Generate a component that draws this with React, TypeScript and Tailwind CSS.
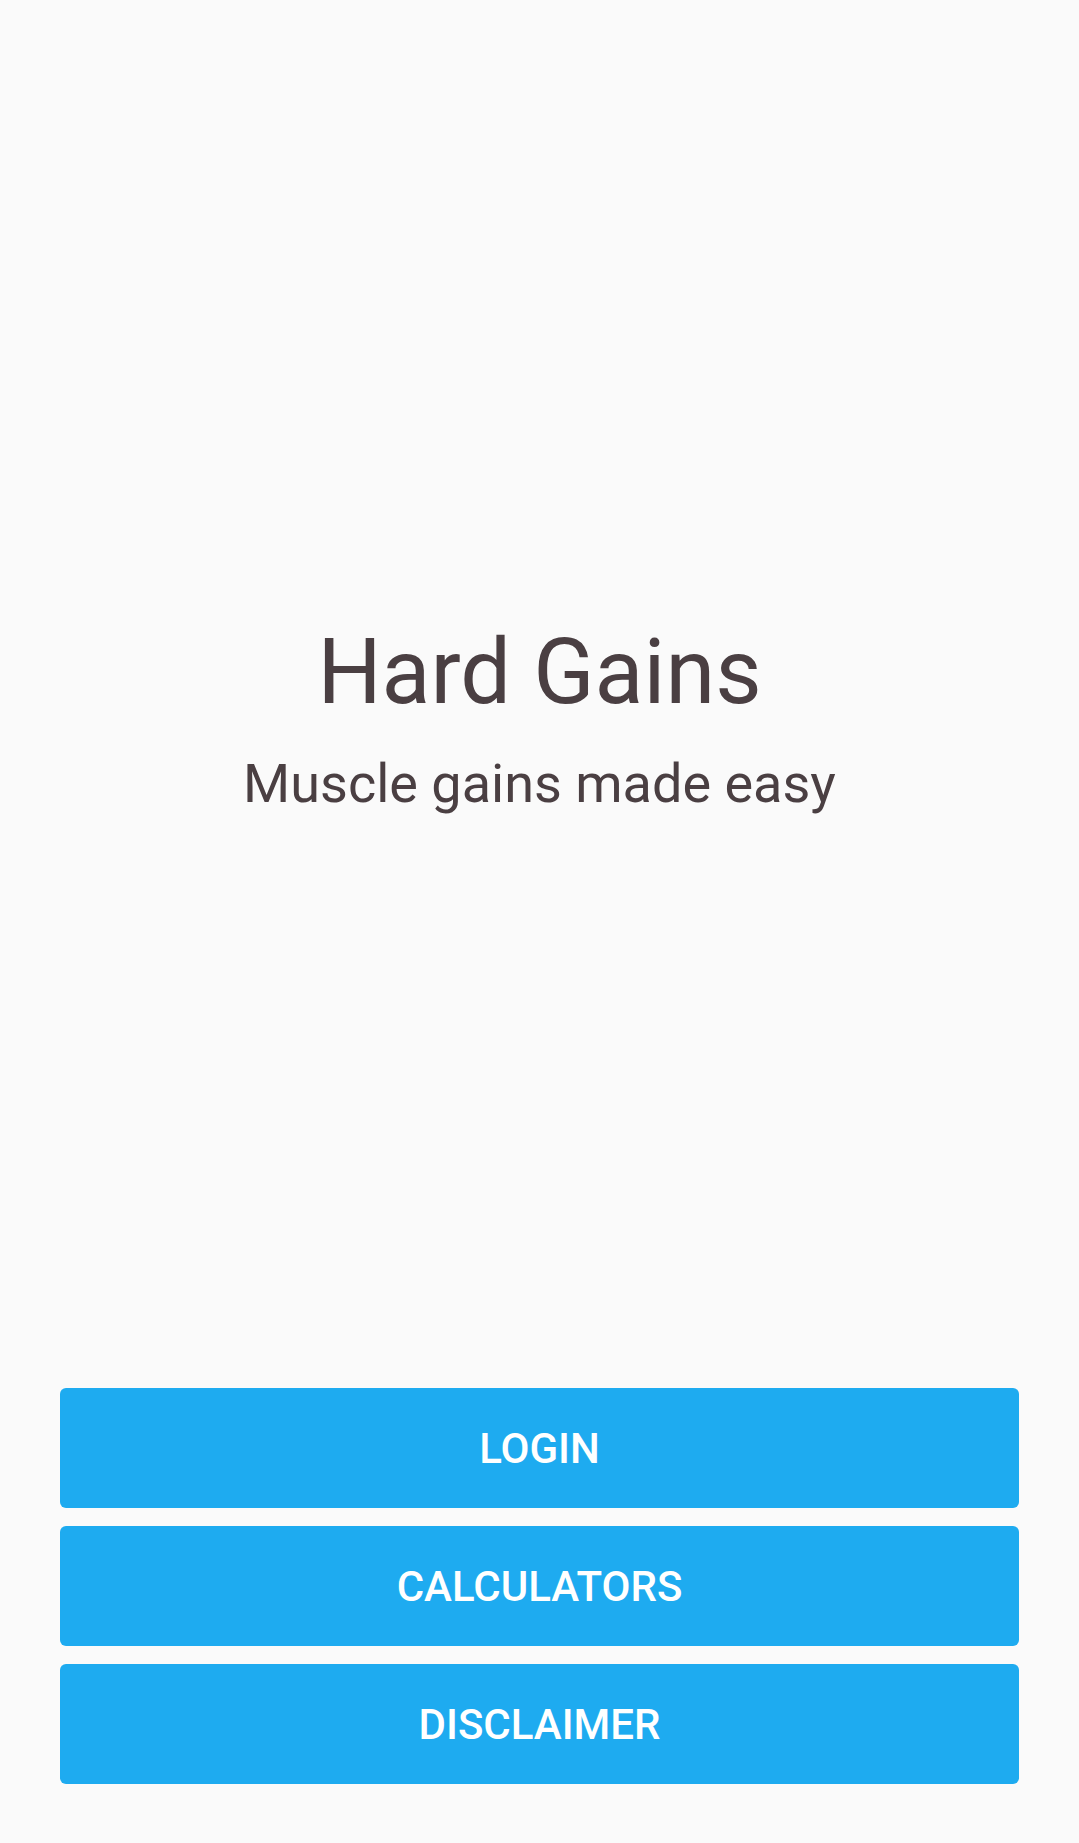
const buttons = ["LOGIN", "CALCULATORS", "DISCLAIMER"];

export default function App() {
  return (
    <div className="flex h-[1843px] w-full flex-col bg-[#fafafa] font-['Roboto',sans-serif]">
      <div className="flex flex-1 flex-col items-center justify-center pt-[48px] text-[#4a3f42]">
        <h1 className="text-[90px] font-normal leading-[110px]">Hard Gains</h1>
        <p className="mt-[21px] text-[54px] leading-[70px]">Muscle gains made easy</p>
      </div>
      <div className="flex flex-col gap-[18px] px-[60px] pb-[59px]">
        {buttons.map((label) => (
          <button
            key={label}
            type="button"
            className="h-[120px] w-full rounded-[6px] bg-[#1eabf0] text-[42px] font-medium text-white"
          >
            {label}
          </button>
        ))}
      </div>
    </div>
  );
}
